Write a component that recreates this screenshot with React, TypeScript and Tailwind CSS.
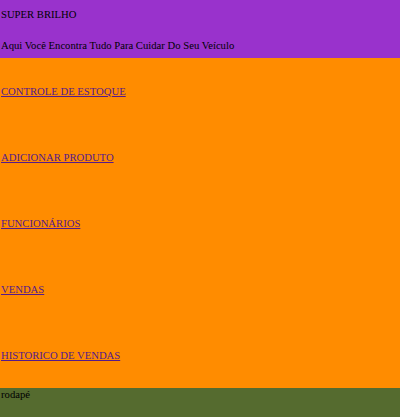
import React from "react";

const links = [
  "CONTROLE DE ESTOQUE",
  "ADICIONAR PRODUTO",
  "FUNCIONÁRIOS",
  "VENDAS",
  "HISTORICO DE VENDAS",
];

const App = () => {
  return (
    <div className="w-[400px] min-h-[417px] flex flex-col font-['Liberation_Serif','Times_New_Roman',serif] text-[10.67px] leading-[12px] text-black">
      <header className="h-[58px] bg-[#9932cc] pl-[1px] pt-[8px] flex flex-col">
        <p>SUPER BRILHO</p>
        <p className="mt-[19px]">Aqui Você Encontra Tudo Para Cuidar Do Seu Veículo</p>
      </header>
      <nav className="bg-[#ff8c00] pl-[1px] pt-[27px] pb-[27px] flex flex-col gap-[54px]">
        {links.map((label) => (
          <a key={label} href="#" className="text-[#551a8b] underline w-fit">
            {label}
          </a>
        ))}
      </nav>
      <footer className="flex-1 bg-[#556b2f] pl-[1px]">
        <p>rodapé</p>
      </footer>
    </div>
  );
};

export default App;
